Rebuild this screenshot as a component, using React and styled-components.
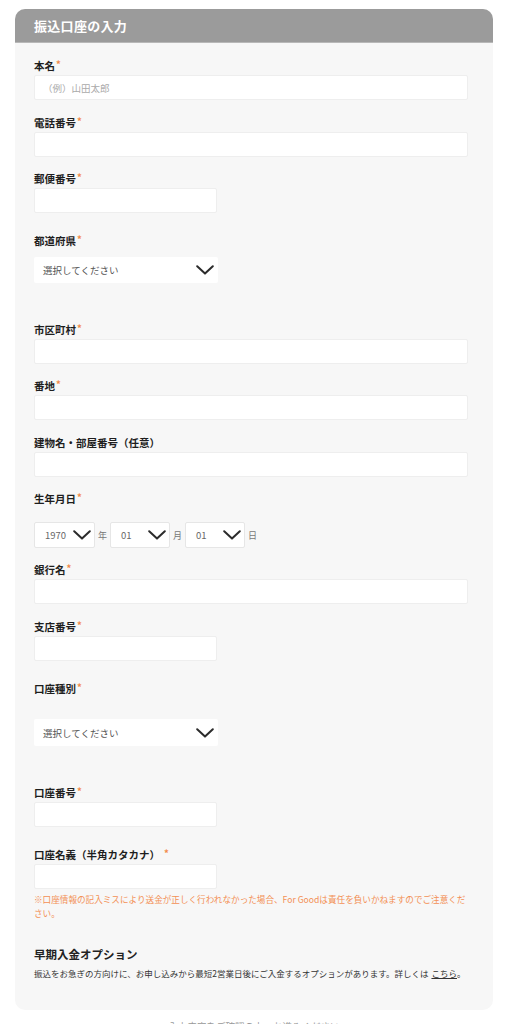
import React from "react";
import styled, { createGlobalStyle } from "styled-components";

const Global = createGlobalStyle`
  html, body { margin: 0; padding: 0; background: #fff; }
  body { font-family: "Noto Sans CJK JP", "Noto Sans", sans-serif; color: #333; }
  * { box-sizing: border-box; }
`;

const Page = styled.div`
  padding: 9px 14px 0 15px;
`;

const Card = styled.section`
  background: #f7f7f7;
  border-radius: 10px;
  overflow: hidden;
`;

const Header = styled.div`
  height: 34px;
  background: #9b9b9b;
  display: flex;
  align-items: center;
  padding-left: 19px;
  border-bottom: 1px solid #b8b8b8;
`;

const Title = styled.h2`
  margin: 0;
  color: #fff;
  font-size: 13px;
  font-weight: 700;
  letter-spacing: 0.3px;
`;

const Body = styled.div`
  padding: 16px 25px 30px 19px;
  display: flex;
  flex-direction: column;
`;

const Field = styled.div`
  display: flex;
  flex-direction: column;
  margin-top: ${(p) => p.$mt || 0}px;
`;

const Label = styled.label`
  font-size: 10.5px;
  font-weight: 700;
  line-height: 14px;
  height: 14px;
  color: #1e1e1e;
  margin-bottom: ${(p) => p.$gap ?? 2}px;
  display: flex;
  align-items: flex-start;
`;

const Req = styled.span`
  color: #f28a4a;
  font-size: 9.5px;
  line-height: 11px;
  margin-left: ${(p) => p.$ml || 1}px;
`;

const Input = styled.input`
  width: ${(p) => (p.$short ? "183px" : "434px")};
  height: 25px;
  border: 1px solid #eeeeee;
  border-radius: 2px;
  background: #fff;
  padding: 0 8px;
  font-family: inherit;
  font-size: 9.5px;
  color: #333;
  outline: none;
  &::placeholder { color: #aaa; }
`;

const SelectBox = styled.div`
  width: ${(p) => p.$w}px;
  height: ${(p) => p.$h || 26}px;
  background: #fff;
  border: ${(p) => (p.$bordered ? "1px solid #e6e6e6" : "none")};
  border-radius: 2px;
  display: flex;
  align-items: center;
  justify-content: space-between;
  padding: 0 ${(p) => p.$pr || 4}px 0 ${(p) => p.$pl || 9}px;
  font-size: ${(p) => p.$fs || 9.5}px;
  color: ${(p) => p.$color || "#555"};
`;

const Chevron = ({ w = 18, h = 10 }) => (
  <svg width={w} height={h} viewBox="0 0 18 10" fill="none">
    <path d="M1.2 1.2 L9 8.6 L16.8 1.2" stroke="#2b2b2b" strokeWidth="2" strokeLinecap="round" strokeLinejoin="round" />
  </svg>
);

const DateRow = styled.div`
  display: flex;
  align-items: center;
  gap: 3px;
`;

const Unit = styled.span`
  font-size: 9px;
  width: 9px;
  color: #777;
`;

const Note = styled.p`
  margin: 3px 0 0;
  font-size: 8.6px;
  line-height: 14px;
  color: #f39055;
  width: 432px;
`;

const OptionTitle = styled.h3`
  margin: 26px 0 0;
  font-size: 11.5px;
  font-weight: 700;
  line-height: 16px;
  color: #222;
`;

const OptionText = styled.p`
  margin: 4.5px 0 0;
  font-size: 8.5px;
  line-height: 13px;
  color: #333;
  white-space: nowrap;
`;

const Link = styled.a`
  color: #333;
  text-decoration: underline;
  margin-left: 3px;
`;

const Footer = styled.p`
  margin: 9px 0 0;
  text-align: center;
  font-size: 9.5px;
  color: #999;
  line-height: 14px;
`;

const TextField = ({ label, req = true, short, placeholder, mt }) => (
  <Field $mt={mt}>
    <Label>
      {label}
      {req && <Req>*</Req>}
    </Label>
    <Input $short={short} placeholder={placeholder} />
  </Field>
);

export default function App() {
  return (
    <>
      <Global />
      <Page>
        <Card>
          <Header>
            <Title>振込口座の入力</Title>
          </Header>
          <Body>
            <TextField label="本名" placeholder="（例）山田太郎" />
            <TextField label="電話番号" mt={16} />
            <TextField label="郵便番号" short mt={15} />
            <Field $mt={21}>
              <Label $gap={9}>
                都道府県<Req>*</Req>
              </Label>
              <SelectBox $w={184}>
                選択してください
                <Chevron />
              </SelectBox>
            </Field>
            <TextField label="市区町村" mt={40} />
            <TextField label="番地" mt={15} />
            <TextField label="建物名・部屋番号（任意）" req={false} mt={16} />
            <Field $mt={15}>
              <Label $gap={16}>
                生年月日<Req>*</Req>
              </Label>
              <DateRow>
                <SelectBox $w={61} $bordered $pl={10} $pr={3} $color="#666">
                  1970
                  <Chevron />
                </SelectBox>
                <Unit>年</Unit>
                <SelectBox $w={60} $bordered $pl={10} $pr={3} $color="#666">
                  01
                  <Chevron />
                </SelectBox>
                <Unit>月</Unit>
                <SelectBox $w={60} $bordered $pl={10} $pr={3} $color="#666">
                  01
                  <Chevron />
                </SelectBox>
                <Unit>日</Unit>
              </DateRow>
            </Field>
            <TextField label="銀行名" mt={15} />
            <TextField label="支店番号" short mt={16} />
            <Field $mt={21}>
              <Label $gap={23}>
                口座種別<Req>*</Req>
              </Label>
              <SelectBox $w={184} $h={27}>
                選択してください
                <Chevron />
              </SelectBox>
            </Field>
            <TextField label="口座番号" short mt={40} />
            <Field $mt={21}>
              <Label>
                口座名義（半角カタカナ）<Req $ml={4}>*</Req>
              </Label>
              <Input $short />
            </Field>
            <Note>
              ※口座情報の記入ミスにより送金が正しく行われなかった場合、For Goodは責任を負いかねますのでご注意ください。
            </Note>
            <OptionTitle>早期入金オプション</OptionTitle>
            <OptionText>
              振込をお急ぎの方向けに、お申し込みから最短2営業日後にご入金するオプションがあります。詳しくは
              <Link href="#">こちら</Link>。
            </OptionText>
          </Body>
        </Card>
        <Footer>入力内容をご確認の上、お進みください</Footer>
      </Page>
    </>
  );
}
